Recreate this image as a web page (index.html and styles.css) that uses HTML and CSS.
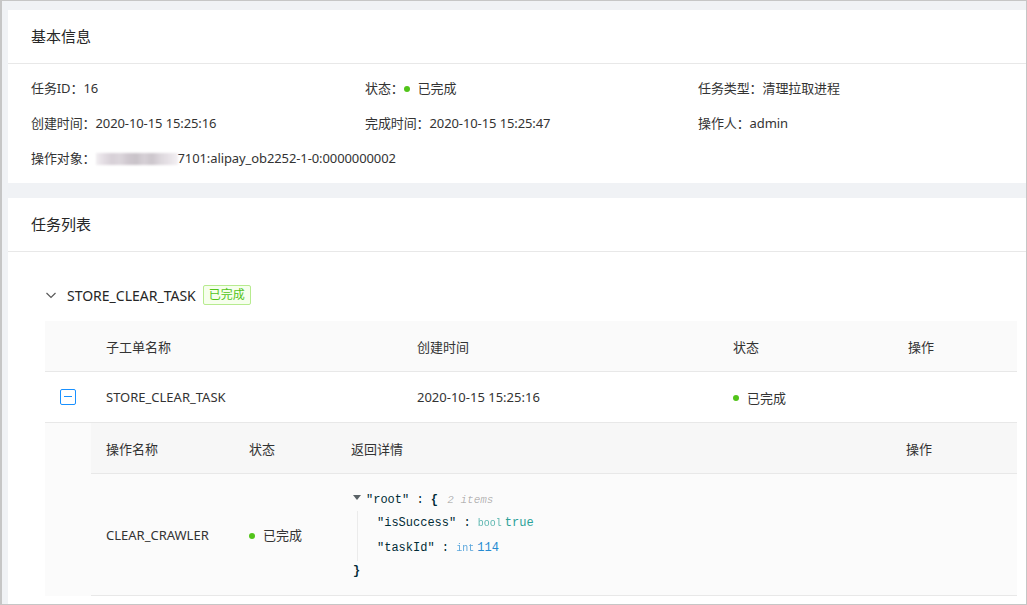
FILE: index.html
```html
<!DOCTYPE html>
<html>
<head>
    <meta charset="UTF-8">
    <title>任务详情</title>
    <link rel="stylesheet" href="styles.css">
</head>
<body>
<div class="frame">
    <div class="card">
        <div class="card-head">基本信息</div>
        <div class="info">
            <div>任务ID：16</div>
            <div>状态：<span class="dot"></span>已完成</div>
            <div>任务类型：清理拉取进程</div>
            <div>创建时间：2020-10-15 15:25:16</div>
            <div>完成时间：2020-10-15 15:25:47</div>
            <div>操作人：admin</div>
            <div class="wide">操作对象：<span class="masked"></span>7101:alipay_ob2252-1-0:0000000002</div>
        </div>
    </div>

    <div class="card">
        <div class="card-head">任务列表</div>
        <div class="task">
            <div class="task-head">
                <svg class="arrow" width="12" height="12" viewBox="0 0 12 12">
                    <polyline points="1.5,4 6,8.5 10.5,4" fill="none" stroke="#595959" stroke-width="1.2"/>
                </svg>
                <span>STORE_CLEAR_TASK</span>
                <span class="tag">已完成</span>
            </div>
            <div class="table">
                <div class="row thead">
                    <div></div>
                    <div class="cell">子工单名称</div>
                    <div class="cell">创建时间</div>
                    <div class="cell">状态</div>
                    <div class="cell">操作</div>
                </div>
                <div class="row">
                    <div><span class="minus"></span></div>
                    <div class="cell">STORE_CLEAR_TASK</div>
                    <div class="cell">2020-10-15 15:25:16</div>
                    <div class="cell"><span class="dot"></span>已完成</div>
                    <div class="cell"></div>
                </div>
                <div class="expand">
                    <div class="sub-row sub-head">
                        <div class="cell">操作名称</div>
                        <div class="cell">状态</div>
                        <div class="cell">返回详情</div>
                        <div class="cell">操作</div>
                    </div>
                    <div class="sub-row sub-body">
                        <div class="cell">CLEAR_CRAWLER</div>
                        <div class="cell"><span class="dot"></span>已完成</div>
                        <div class="cell">
                            <div class="json">
                                <div class="j-root"><span class="caret"></span><span class="key">"root"</span> : <span class="brace">{</span> <span class="size">2 items</span></div>
                                <div class="j-body">
                                    <div class="j-line"><span class="key">"isSuccess"</span> : <span class="type t-bool">bool</span><span class="v-bool">true</span></div>
                                    <div class="j-line"><span class="key">"taskId"</span> : <span class="type t-int">int</span><span class="v-int">114</span></div>
                                </div>
                                <div class="j-end"><span class="brace">}</span></div>
                            </div>
                        </div>
                        <div class="cell"></div>
                    </div>
                </div>
            </div>
        </div>
    </div>
</div>
</body>
</html>
```

FILE: styles.css
```css
* {
    margin: 0;
    padding: 0;
}
body {
    background: #fff;
}
.frame {
    width: 1027px;
    height: 605px;
    box-sizing: border-box;
    border: 1px solid #c6c6c6;
    border-left-width: 2px;
    background-color: #f0f2f5;
    padding: 9px 0 0 6px;
    overflow: hidden;
    font-family: "Noto Sans", "Noto Sans CJK SC", sans-serif;
    font-size: 13px;
    color: #333;
}
.card {
    background-color: #fff;
}
.card + .card {
    margin-top: 15px;
}
.card-head {
    height: 53px;
    line-height: 53px;
    padding: 0 23px;
    font-size: 15px;
    color: #262626;
    border-bottom: 1px solid #e8e8e8;
}
.info {
    display: grid;
    grid-template-columns: 334px 333px 1fr;
    padding: 7px 23px;
}
.info > div {
    height: 35px;
    line-height: 35px;
    white-space: nowrap;
    letter-spacing: -0.1px;
}
.dot {
    display: inline-block;
    width: 6px;
    height: 6px;
    border-radius: 50%;
    background-color: #52c41a;
    vertical-align: middle;
    margin: -2px 8px 0 0;
}
.masked {
    display: inline-block;
    width: 82px;
    height: 12px;
    vertical-align: middle;
    margin-top: -2px;
    background: linear-gradient(90deg, #f1eef1 0, #e3dde3 8px, #d7d0d7 16px, #dcd6dc 24px, #cfc8cf 32px, #c9c3c9 40px, #d6d0d6 48px, #ccc6cc 56px, #dcd7dc 64px, #e6e1e6 72px, #f3f0f3 82px);
    filter: blur(1px);
}
.task {
    padding: 26px 9px 30px 37px;
}
.task-head {
    display: flex;
    align-items: center;
    height: 34px;
    font-size: 14px;
    color: #262626;
}
.arrow {
    margin-right: 10px;
}
.tag {
    display: inline-block;
    height: 18px;
    line-height: 18px;
    padding: 0 5px;
    margin-left: 7px;
    font-size: 12px;
    color: #52c41a;
    background-color: #f6ffed;
    border: 1px solid #b7eb8f;
    border-radius: 2px;
}
.table {
    margin-top: 9px;
}
.row {
    display: grid;
    grid-template-columns: 46px 311px 316px 175px 1fr;
    height: 50px;
    align-items: center;
    border-bottom: 1px solid #e8e8e8;
}
.thead {
    background-color: #fafafa;
}
.cell {
    padding-left: 15px;
    white-space: nowrap;
}
.minus {
    display: block;
    position: relative;
    width: 14px;
    height: 14px;
    margin-left: 15px;
    border: 1px solid #1890ff;
    border-radius: 2px;
}
.minus::after {
    content: "";
    position: absolute;
    left: 3px;
    right: 3px;
    top: 6px;
    height: 1px;
    background-color: #1890ff;
}
.expand {
    background-color: #fbfbfb;
    padding-left: 46px;
}
.sub-row {
    display: grid;
    grid-template-columns: 143px 102px 555px 1fr;
    align-items: center;
    border-bottom: 1px solid #e8e8e8;
}
.sub-head {
    height: 50px;
    background-color: #f7f7f7;
}
.sub-body {
    height: 121px;
}
.json {
    font-family: "Liberation Mono", monospace;
    font-size: 12px;
    color: #002b36;
    padding-left: 2px;
}
.j-root {
    height: 22px;
    line-height: 22px;
}
.caret {
    display: inline-block;
    width: 0;
    height: 0;
    border-left: 4px solid transparent;
    border-right: 4px solid transparent;
    border-top: 5px solid #5a6266;
    margin-right: 5px;
    vertical-align: middle;
    margin-top: -3px;
}
.brace {
    font-weight: bold;
}
.size {
    font-style: italic;
    color: rgba(0, 0, 0, 0.3);
    font-size: 11px;
    margin-left: 2px;
}
.j-body {
    margin-left: 4px;
    padding-left: 19px;
    border-left: 1px solid #ebebeb;
}
.j-line {
    height: 25px;
    line-height: 25px;
}
.type {
    font-size: 10px;
    margin-right: 3px;
    opacity: 0.75;
}
.t-bool,
.v-bool {
    color: #2aa198;
}
.t-int,
.v-int {
    color: #268bd2;
}
.j-end {
    height: 20px;
    line-height: 20px;
}
```
